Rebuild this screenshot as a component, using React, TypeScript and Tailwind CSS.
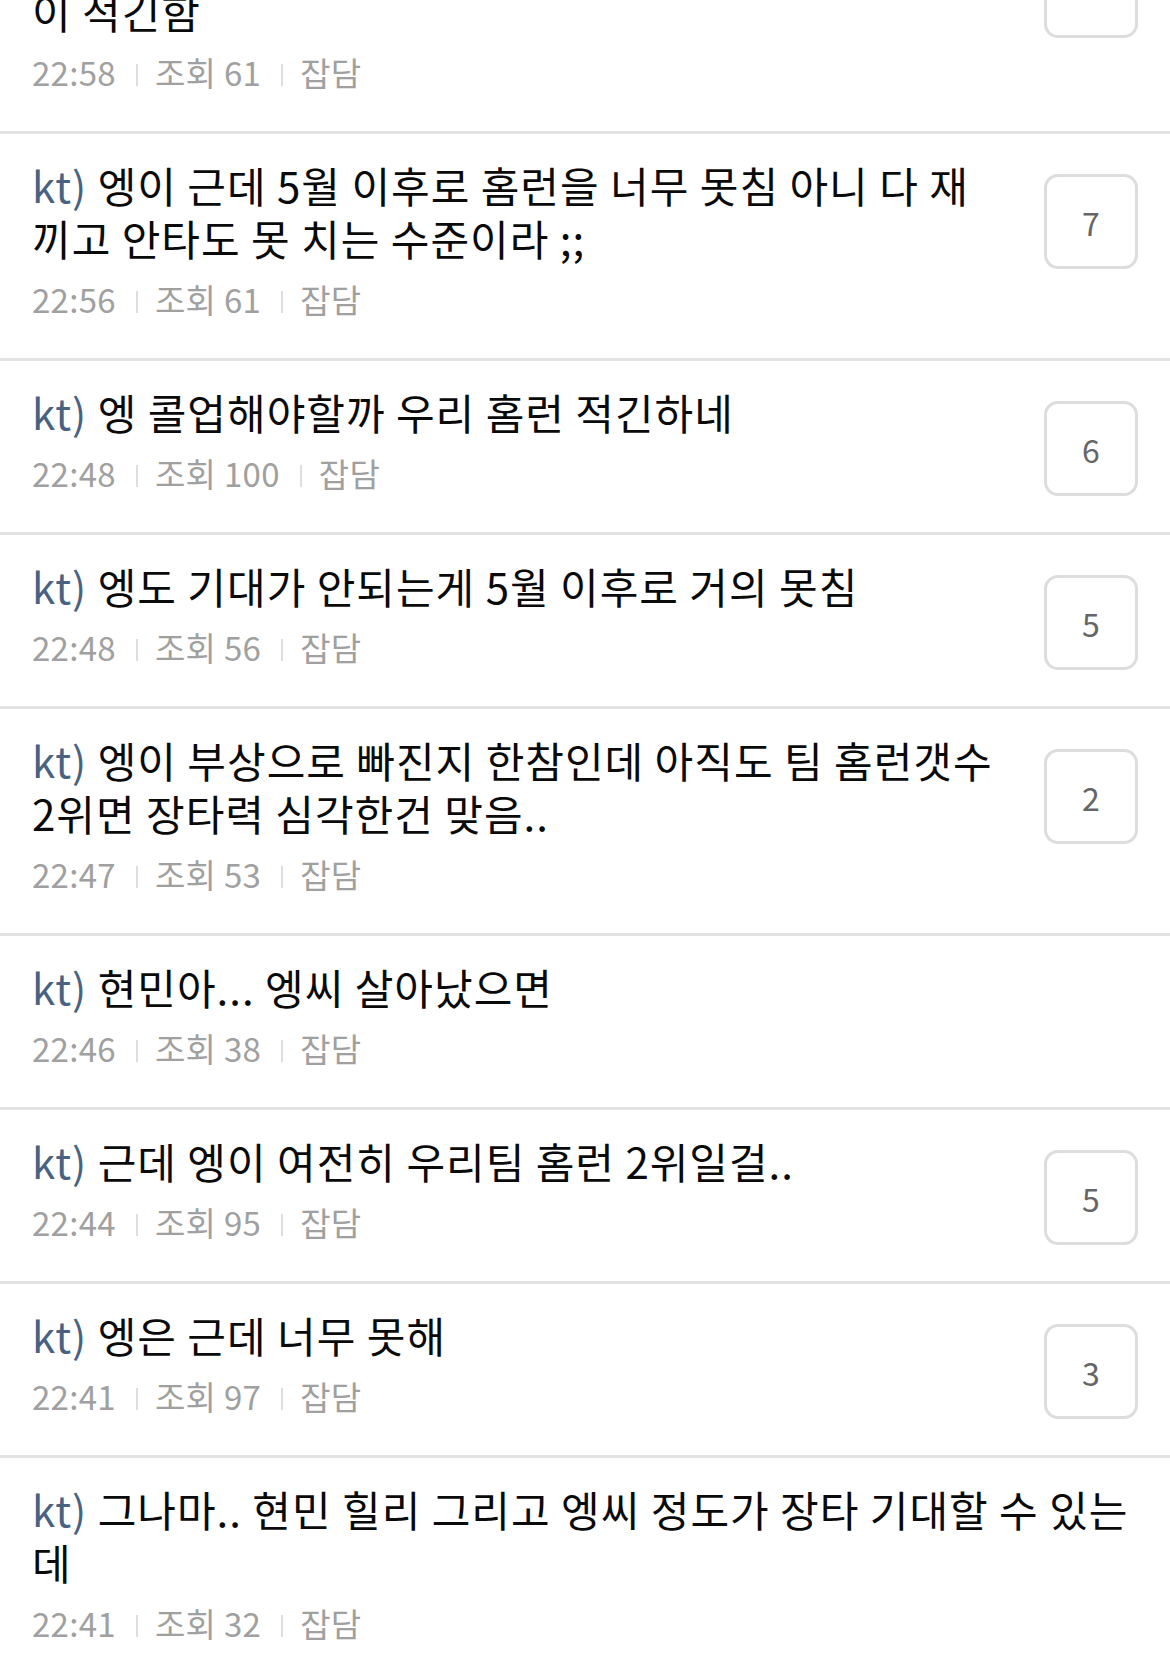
import React from "react";

type Post = { title: string; time: string; views: number; comments?: number };

const posts: Post[] = [
  { title: "엥이 근데 5월 이후로 홈런을 너무 못침 아니 다 재끼고 안타도 못 치는 수준이라 ;;", time: "22:56", views: 61, comments: 7 },
  { title: "엥 콜업해야할까 우리 홈런 적긴하네", time: "22:48", views: 100, comments: 6 },
  { title: "엥도 기대가 안되는게 5월 이후로 거의 못침", time: "22:48", views: 56, comments: 5 },
  { title: "엥이 부상으로 빠진지 한참인데 아직도 팀 홈런갯수 2위면 장타력 심각한건 맞음..", time: "22:47", views: 53, comments: 2 },
  { title: "현민아... 엥씨 살아났으면", time: "22:46", views: 38 },
  { title: "근데 엥이 여전히 우리팀 홈런 2위일걸..", time: "22:44", views: 95, comments: 5 },
  { title: "엥은 근데 너무 못해", time: "22:41", views: 97, comments: 3 },
  { title: "그나마.. 현민 힐리 그리고 엥씨 정도가 장타 기대할 수 있는데", time: "22:41", views: 32 },
];

const font = { fontFamily: '"Noto Sans CJK KR", "Noto Sans", sans-serif' };

function Sep() {
  return <span className="ml-[20px] mr-[17px] inline-block h-[22px] w-[2px] translate-y-[3px] bg-[#dedede]" />;
}

function Meta({ time, views }: { time: string; views: number }) {
  return (
    <div className="mt-[13px] flex items-center text-[33px] leading-[44px] tracking-[0.3px] text-[#a0a0a0]">
      <span>{time}</span>
      <Sep />
      <span>조회 {views}</span>
      <Sep />
      <span>잡담</span>
    </div>
  );
}

function Badge({ n, className }: { n?: number; className?: string }) {
  return (
    <div
      className={
        "flex h-[95px] w-[94px] shrink-0 items-center justify-center rounded-[14px] border-[3px] border-[#dddddd] bg-white text-[32px] text-[#666666] " +
        (className ?? "")
      }
    >
      {n}
    </div>
  );
}

function Title({ children }: { children: React.ReactNode }) {
  return <div className="text-[42px] leading-[53px] tracking-[1px] text-[#0a0a0a]">{children}</div>;
}

function Item({ p }: { p: Post }) {
  return (
    <div className="flex items-start border-t-[3px] border-[#e3e3e3] pl-[32px] pr-[32px]">
      <div className="min-w-0 flex-1 pt-[24px] pb-[37px]">
        <Title>
          <span className="text-[#4a6282]">kt)</span> {p.title}
        </Title>
        <Meta time={p.time} views={p.views} />
      </div>
      {p.comments !== undefined && <Badge n={p.comments} className="ml-[36px] mt-[40px]" />}
    </div>
  );
}

export default function App() {
  return (
    <div className="min-h-[1665px] w-[1170px] overflow-hidden bg-white" style={font}>
      <div className="flex items-start pl-[32px] pr-[32px]">
        <div className="min-w-0 flex-1 mt-[-16px] pb-[37px]">
          <Title>이 적긴함</Title>
          <Meta time="22:58" views={61} />
        </div>
        <Badge className="ml-[36px] mt-[-57px]" />
      </div>
      {posts.map((p, i) => (
        <Item key={i} p={p} />
      ))}
    </div>
  );
}
